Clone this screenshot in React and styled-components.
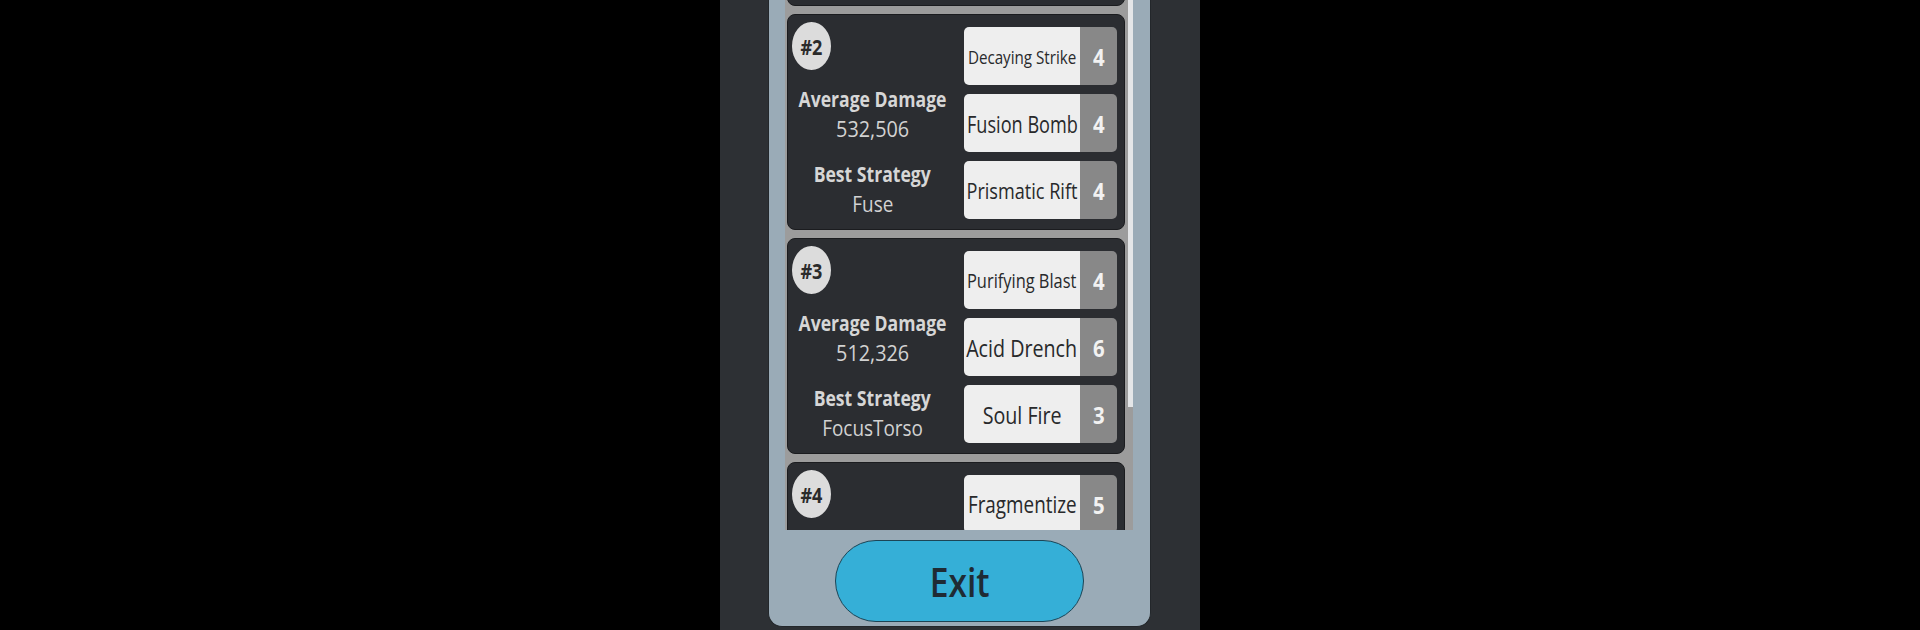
import React, { useLayoutEffect, useRef, useState } from 'react'
import styled, { createGlobalStyle } from 'styled-components'

const GlobalStyle = createGlobalStyle`
    html, body {
        margin: 0;
        padding: 0;
        background: #000;
    }
    body {
        font-family: "Open Sans", "Noto Sans", sans-serif;
    }
`;

const Page = styled.div`
    width: 1920px;
    height: 630px;
    overflow: hidden;
    display: flex;
    justify-content: center;
    background: #000;
`;

const Panel = styled.div`
    width: 480px;
    height: 630px;
    background: #2d3034;
    padding-left: 48px;
    box-sizing: border-box;
`;

const Frame = styled.div`
    width: 383px;
    height: 627px;
    box-sizing: border-box;
    background: #9aabb7;
    border: 1px solid #23272b;
    border-top: none;
    border-radius: 0 0 14px 14px;
    padding-left: 16px;
    display: flex;
    flex-direction: column;
`;

const ScrollArea = styled.div`
    width: 348px;
    height: 530px;
    flex-shrink: 0;
    background: #9c9c9c;
    overflow: hidden;
    display: flex;
    gap: 3px;
`;

const List = styled.div`
    width: 340px;
    padding-left: 2px;
    box-sizing: border-box;
    display: flex;
    flex-direction: column;
    gap: 8px;
    margin-top: -210px;
`;

const Track = styled.div`
    width: 5px;
    height: 100%;
`;

const Thumb = styled.div`
    width: 5px;
    height: 407px;
    background: #e4e6e8;
`;

const Card = styled.div`
    width: 338px;
    height: 216px;
    flex-shrink: 0;
    box-sizing: border-box;
    background: #2b2d31;
    border: 1px solid #1b1c1f;
    border-radius: 8px;
    display: flex;
    padding: 12px 7px 0 0;
`;

const Info = styled.div`
    width: 169px;
    margin-top: -5px;
    display: flex;
    flex-direction: column;
    align-items: center;
`;

const Badge = styled.div`
    align-self: flex-start;
    margin-left: 4px;
    width: 39px;
    height: 48px;
    border-radius: 50%;
    background: #dcdcdc;
    display: flex;
    align-items: center;
    justify-content: center;
    color: #2b2b2b;
    font-weight: 700;
    font-size: 22px;
`;

const Squeeze = styled.span`
    display: inline-block;
    white-space: nowrap;
    transform: scaleX(${p => p.$sx || 0.8});
`;

const Heading = styled.div`
    margin-top: ${p => p.$gap}px;
    height: 30px;
    line-height: 30px;
    font-size: 22px;
    font-weight: 700;
    color: #d6d6d6;
`;

const Value = styled.div`
    height: 30px;
    line-height: 30px;
    font-size: 22px;
    font-weight: 400;
    color: #d2d2d2;
`;

const Skills = styled.div`
    margin-left: 7px;
    width: 153px;
    display: flex;
    flex-direction: column;
    gap: 9px;
`;

const Skill = styled.div`
    height: 58px;
    flex-shrink: 0;
    display: flex;
    border-radius: 5px;
    overflow: hidden;
`;

const SkillName = styled.div`
    width: 116px;
    background: #eeeeee;
    display: flex;
    align-items: center;
    justify-content: center;
    overflow: hidden;
`;

const NameText = styled.span`
    display: inline-block;
    white-space: nowrap;
    font-size: ${p => p.$size}px;
    color: #28292b;
    transform-origin: center;
`;

const SkillLevel = styled.div`
    width: 37px;
    background: #888888;
    display: flex;
    align-items: center;
    justify-content: center;
    color: #f2f2f2;
    font-weight: 700;
    font-size: 24px;
`;

const ExitButton = styled.button`
    margin: 10px 0 0 50px;
    width: 249px;
    height: 82px;
    border-radius: 41px;
    background: #35afd7;
    border: 1px solid #1c4556;
    color: #1f2b34;
    font-family: "Open Sans", "Noto Sans", sans-serif;
    font-size: 40px;
    font-weight: 600;
    padding: 0;
    cursor: pointer;
    display: flex;
    align-items: center;
    justify-content: center;
`;

const results = [
    {
        rank: 1, damage: '548,912', strategy: 'Fuse',
        skills: [['Fusion Bomb', 5, 24], ['Acid Drench', 4, 24], ['Soul Fire', 4, 24]],
    },
    {
        rank: 2, damage: '532,506', strategy: 'Fuse',
        skills: [['Decaying Strike', 4, 18.5], ['Fusion Bomb', 4, 24], ['Prismatic Rift', 4, 22.5]],
    },
    {
        rank: 3, damage: '512,326', strategy: 'FocusTorso',
        skills: [['Purifying Blast', 4, 20], ['Acid Drench', 6, 24], ['Soul Fire', 3, 24]],
    },
    {
        rank: 4, damage: '498,140', strategy: 'Fuse',
        skills: [['Fragmentize', 5, 23], ['Fusion Bomb', 4, 24], ['Soul Fire', 3, 24]],
    },
];

// shrinks the label sideways so it fits the button, like auto-sized game text
const SkillLabel = ({ name, size }) => {
    const ref = useRef(null);
    const [sx, setSx] = useState(0.82);
    useLayoutEffect(() => {
        const w = ref.current.offsetWidth;
        setSx(Math.min(0.82, 111 / w));
    }, [name, size]);
    return (
        <NameText ref={ref} $size={size} style={{ transform: `scaleX(${sx})` }}>
            {name}
        </NameText>
    );
};

const ResultCard = ({ item }) => (
    <Card>
        <Info>
            <Badge><Squeeze $sx={0.82}>#{item.rank}</Squeeze></Badge>
            <Heading $gap={13}><Squeeze>Average Damage</Squeeze></Heading>
            <Value><Squeeze $sx={0.9}>{item.damage}</Squeeze></Value>
            <Heading $gap={15}><Squeeze>Best Strategy</Squeeze></Heading>
            <Value><Squeeze $sx={0.86}>{item.strategy}</Squeeze></Value>
        </Info>
        <Skills>
            {item.skills.map(([name, level, size]) => (
                <Skill key={name}>
                    <SkillName><SkillLabel name={name} size={size} /></SkillName>
                    <SkillLevel><Squeeze $sx={0.85}>{level}</Squeeze></SkillLevel>
                </Skill>
            ))}
        </Skills>
    </Card>
);

const App = () => {
    return (
        <Page>
            <GlobalStyle />
            <Panel>
                <Frame>
                    <ScrollArea>
                        <List>
                            {results.map(item => <ResultCard key={item.rank} item={item} />)}
                        </List>
                        <Track><Thumb /></Track>
                    </ScrollArea>
                    <ExitButton><Squeeze $sx={0.84}>Exit</Squeeze></ExitButton>
                </Frame>
            </Panel>
        </Page>
    )
}

export default App
